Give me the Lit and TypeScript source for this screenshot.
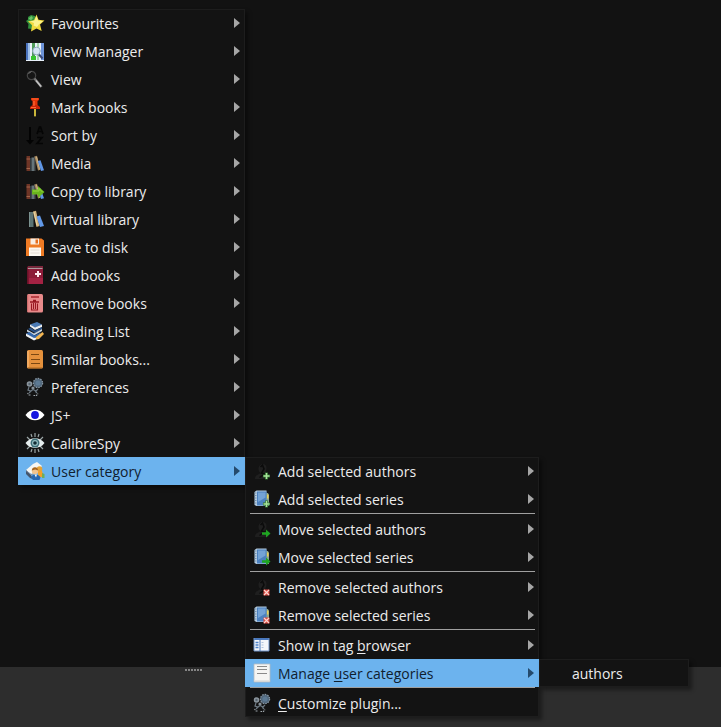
import { LitElement, html, svg, css, nothing, TemplateResult, SVGTemplateResult } from "lit";
import { customElement, property } from "lit/decorators.js";
import { classMap } from "lit/directives/class-map.js";

interface Entry {
  label?: string;
  mnemonic?: number;
  icon?: string;
  arrow?: boolean;
  separator?: boolean;
  children?: Entry[];
}

const shelf = svg`
  <path d="M1.500 3h3.500v15H1.500z" fill="#6e3526"/><path d="M1.500 6h3.500M1.500 15.500h3.500" stroke="#a3654a" stroke-width="1"/>
  <path d="M5 5h1.500v13H5z" fill="#33393d"/>
  <path d="M6.500 4.500h2.500v13.500H6.500z" fill="#66757a"/>
  <path d="M9 3.500h1.500V18H9z" fill="#4b5052"/>
  <path d="M9.500 3.500l2.500-.8 3.500 14-2.500 .8z" fill="#a98a60"/>
  <path d="M11.500 4l3 12.500" stroke="#d0b486" stroke-width="1"/>
  <path d="M12.800 8l2.700-.8 3.500 10-3 .8z" fill="#5f96e6"/>`;

const gearFigure = svg`
  <circle cx="13" cy="6" r="4.600" fill="#51677b" stroke="#8796a3" stroke-width="1.200" stroke-dasharray="1.600 1"/>
  <circle cx="13" cy="6" r="2.600" fill="#5d7a94"/>
  <circle cx="4.500" cy="7" r="2.800" fill="#8b959d"/>
  <circle cx="4.500" cy="7" r="1.200" fill="#56646f"/>
  <circle cx="8" cy="11" r="1.600" fill="#87919a"/>
  <path d="M4 10l-1 3 3 1 2-1.500 3 1.500 2-2M6 14l-2 2M10 14l2 2" stroke="#6c7882" stroke-width="1.200" fill="none"/>
  <path d="M2.500 16l1.500 2h2M8.500 18.500h3l1.500-2" stroke="#a0a8ae" stroke-width="1.100" stroke-dasharray="1.600 .8" fill="none"/>`;

const author = svg`
  <path d="M6.500 8c0-6 8-7 8-1 0 3-1.500 4-1 6 2 1 3 2 3 5H3c0-4 3-4 5.500-6C7.500 11 6.500 10 6.500 8z" fill="#1f1f1f"/>
  <path d="M8.500 6l2-2 1.500 4-2.500 4 3 1-5 3.500" stroke="#0b0b0b" stroke-width="1.500" fill="none"/>`;

const series = svg`
  <path d="M2.500 3l2-1.500h10V17h-10l-2-1z" fill="#b4cbe0"/>
  <path d="M14 4h2l1 2v11h-3z" fill="#8ba590"/><path d="M15 5.500h1.500v4H15z" fill="#e9cf54"/>
  <path d="M5 2.500h9.500v14H5z" fill="#4c81bf"/><path d="M6 3.500h7.500v5L6 13z" fill="#74a3d6"/>
  <path d="M2.500 4h2M2.500 6.500h2M2.500 9h2M2.500 11.500h2M2.500 14h2" stroke="#64839f" stroke-width=".8"/>`;

const plus = svg`
  <path d="M14.500 11.500v7M11 15h7" stroke="#2d6d2d" stroke-width="3"/>
  <path d="M14.500 12v6M11.500 15h6" stroke="#a9e39c" stroke-width="1.500"/>`;
const moveArrow = svg`<path d="M10 13.200h4V10.500l4.500 4-4.500 4v-2.700h-4z" fill="#1fa522"/>`;
const cross = svg`
  <path d="M11.500 12.500h6v6h-6z" fill="#dc4a42"/>
  <path d="M12 13l5 5M17 13l-5 5" stroke="#ffd5cf" stroke-width="1.200"/>`;

const icons: Record<string, SVGTemplateResult> = {
  favourites: svg`
    <path d="M3 4l3-2 4 1 2 8-5 5-4-.5 .5-4.500-2.500-3 2-1.500z" fill="#2f8f3c"/><path d="M3.500 5.500l3-2.500 1.500 2-2 2.500z" fill="#6cc566"/>
    <path d="M11.500 1.500l2 5.200 6 .8-4.500 4 1.700 6.500-5.200-2.500-5.500 3 1-6.200L3 8.200l6-1z" fill="#f0d93c"/>
    <path d="M11.500 3l1.500 4.500 5 .7-4 3-2 2.800-3.500-1.500 .5-2.500-4-1.500 4.500-1z" fill="#fdf38e"/>`,
  manager: svg`
    <path d="M1 2h18v18H1z" fill="#e9f1fa"/>
    <path d="M1 2h2v17H1z" fill="#4b73bd"/><path d="M3 2h2v17H3z" fill="#9fbfe8"/><path d="M7 2h3v17H7z" fill="#4f9b58"/><path d="M12 2h2v17h-2z" fill="#a4d3ae"/><path d="M16 2h3v17h-3z" fill="#6d93d8"/>
    <path d="M6 15h5v4H6z" fill="#38c531"/>
    <circle cx="11.500" cy="10" r="3.800" fill="#d4e5f4" stroke="#8fa6bd"/>
    <path d="M14 13.500l3.500 4" stroke="#3b4a78" stroke-width="2"/>`,
  view: svg`
    <circle cx="6.500" cy="6.500" r="4.200" fill="#161616" stroke="#454545" stroke-width="1.200"/><path d="M3.500 4.500l3-2" stroke="#777" stroke-width="1"/>
    <path d="M9.500 9.500l7 8.500" stroke="#777" stroke-width="2.400"/>
    <path d="M11 11.500l5 6" stroke="#c9c9c9" stroke-width="1.200"/>`,
  pin: svg`
    <path d="M9 12h2v7l-1 .8-1-.8z" fill="#c9b53a"/>
    <path d="M6 1h8v2l-1.500 1v4.500H7.500V4L6 3z" fill="#e33309"/>
    <path d="M7.500 8h5l2.500 2v2H5v-2z" fill="#c92408"/>
    <path d="M7 2h6M9 4v5M6 10.500h5" stroke="#ff6a35" stroke-width="1.200"/>`,
  sort: svg`
    <path d="M4 2h2v13h3l-4 4.500L1 15h3z" fill="#030303"/>
    <path d="M12 9l2.500-7h1L18 9M13 6.500h4M12 12.500h5l-5 6h6" stroke="#050505" stroke-width="1.700" fill="none"/>`,
  media: shelf,
  copy: svg`${shelf}<path d="M7 8.500h6V5l6.500 6-6.500 6v-3.500H7z" fill="#68b51c"/><path d="M8 10h6V7.500l3.500 3.500" stroke="#98d642" stroke-width="1" fill="none"/>`,
  virtual: svg`
    <path d="M4 3h4.500v15H4z" fill="#5b7374"/><path d="M4.500 3v15" stroke="#7b9290" stroke-width="1"/>
    <path d="M8 2.500l3-.8L14.500 17l-3 1z" fill="#d1b27d"/><path d="M9 3l3 13.500" stroke="#ead6a6" stroke-width="1"/>
    <path d="M11.500 7.500l3.500-1L19 17l-4 1z" fill="#6299e8"/>`,
  save: svg`
    <path d="M1 1.500h15.500l2.500 2V19H1z" fill="#ef7b24"/><path d="M4 10.500h12V19H4z" fill="#fdf8f1"/>
    <path d="M5.500 1.500h8.500v6H5.500z" fill="#f8ede3"/><path d="M10.500 2.500h2.500v4h-2.500z" fill="#e66e1d"/>
    <path d="M5.500 13h9M5.500 16h9" stroke="#e6ddd4" stroke-width="1"/>`,
  add: svg`
    <path d="M2 3l1-2h15v18H3l-1-1z" fill="#8d1b38"/><path d="M3 3h14.500v1H3z" fill="#b09a9e"/><path d="M3 1.500h14.500v1.500H3z" fill="#6c313e"/>
    <path d="M2 4h1.500v15H2z" fill="#6a1228"/><path d="M4 13h14v6H4z" fill="#a42243"/>
    <path d="M13 6v6M10 9h6" stroke="#ffe9ef" stroke-width="2"/>`,
  remove: svg`
    <rect x="2" y="1" width="16" height="18.500" rx="1.500" fill="#e88a8a"/><path d="M2.700 2v16.500" stroke="#c96666" stroke-width="1"/>
    <path d="M6 4h8" stroke="#a01820" stroke-width="1.300"/>
    <path d="M5 9h9M8 7.500h3" stroke="#971720" stroke-width="1.300"/>
    <path d="M6.500 10.500v6.500h6v-6.500M8.500 10v6M10.500 10v6" stroke="#971720" stroke-width="1.100" fill="none"/>`,
  reading: svg`
    <path d="M5 3.500l7-2.500 5 2.500-7 3.500z" fill="#4b7ab4"/><path d="M5 3.500v2l5 3.500 7-3v-2.500l-7 3z" fill="#e9eef3"/>
    <path d="M3 8l2.500-1.500 4.500 3 7-3.500v2l-7 4z" fill="#2a5288"/><path d="M2 8.500v2l7 4 8-4.500V8l-8 4.500z" fill="#c5d2df"/>
    <path d="M1 12.500l3.500-1.500 5 3.500 6-3v2L9 17.500z" fill="#3368ae"/><path d="M1 12.500v2.500l8 4.500 2-1v-2l-2 .5z" fill="#eef2f6"/>
    <path d="M11 16l6.500-5 1.500 2-5 5-3 .5z" fill="#f2b551"/>`,
  similar: svg`
    <rect x="2" y="1" width="16" height="18.500" rx="1.500" fill="#e5913c"/><path d="M3 2v16.500" stroke="#f3b26c" stroke-width="1.500"/><path d="M3 19h14" stroke="#a8641f" stroke-width="1"/>
    <path d="M6 5.500h8M6 10.500h9M6 14.500h9" stroke="#7a4712" stroke-width="1.200"/>`,
  gears: gearFigure,
  eye: svg`
    <path d="M.500 10C5 3 15 3 19.500 10 15 17 5 17 .500 10z" fill="#fff"/>
    <circle cx="10" cy="10" r="3.900" fill="#1515e0"/>`,
  spy: svg`
    <path d="M10 0v4M6 1l1 3M14 1l-1 3M2 4l3 3M18 4l-3 3M10 16v4M6 19l1-3M14 19l-1-3M2 16l3-3M18 16l-3-3" stroke="#9aa4a5" stroke-width="1.200"/>
    <path d="M.500 10C5 3.500 15 3.500 19.500 10 15 16.500 5 16.500 .500 10z" fill="#e6eded"/>
    <circle cx="10" cy="10" r="4.500" fill="#3c6d77"/><circle cx="10" cy="10" r="3" fill="#93bcc0"/><circle cx="10" cy="10" r="1.800" fill="#102a33"/>`,
  category: svg`
    <path d="M1 9l5 5 2 4-3-1-4-4z" fill="#45566c"/>
    <path d="M1 9l7-6 4-2 5 4-6 7-5 1z" fill="#f6f6f2"/><path d="M1 9.500l5 4 4-1" stroke="#7d8da1" stroke-width="1" fill="none"/>
    <circle cx="14.500" cy="8" r="2.800" fill="#e5a338"/><path d="M13 10h4l2 6h-6z" fill="#f0a02d"/><path d="M17 12l2.500 1v4H17z" fill="#6fae5a"/>
    <circle cx="10" cy="10" r="3.200" fill="#f2c48e"/><path d="M6.800 9.500c0-4.500 6.400-4.500 6.400 0l-3-1z" fill="#a5651f"/>
    <path d="M6 16.500c1-4 8-4 9.500 0l-1 2.500H8z" fill="#2868b0"/><path d="M9.500 13.500l1.500 3 1-3z" fill="#fff"/>`,
  authorAdd: svg`${author}${plus}`,
  authorMove: svg`${author}${moveArrow}`,
  authorRemove: svg`${author}${cross}`,
  seriesAdd: svg`${series}${plus}`,
  seriesMove: svg`${series}${moveArrow}`,
  seriesRemove: svg`${series}${cross}`,
  browser: svg`
    <path d="M2 3h15v13H2z" fill="#f3f6fb"/><path d="M2 3h15v2H2z" fill="#4978bd"/><path d="M2 3v13h15V3" stroke="#6e93c9" stroke-width="1" fill="none"/>
    <path d="M8 5v11" stroke="#4978bd" stroke-width="1"/>
    <path d="M3.500 7.500h3M3.500 10h3M3.500 12.500h3" stroke="#4d83cb" stroke-width="1.300"/><path d="M9.500 7.500h2M9.500 10h2M9.500 12.500h2" stroke="#b3c5df" stroke-width="1"/>`,
  document: svg`
    <path d="M2 1h16v18H2z" fill="#f5f5f3" stroke="#b4babf" stroke-width=".8"/><path d="M3 18h14" stroke="#d0d0ce"/>
    <path d="M5 3.500h10M5 6.500h10M5 10.500h10" stroke="#8a8a8a" stroke-width="1.100"/>`,
};

const sub = (label: string, icon: string, children?: Entry[], mnemonic?: number): Entry => ({
  label,
  icon,
  children,
  mnemonic,
  arrow: true,
});

const categoryMenu: Entry[] = [
  sub("Add selected authors", "authorAdd"),
  sub("Add selected series", "seriesAdd"),
  { separator: true },
  sub("Move selected authors", "authorMove"),
  sub("Move selected series", "seriesMove"),
  { separator: true },
  sub("Remove selected authors", "authorRemove"),
  sub("Remove selected series", "seriesRemove"),
  { separator: true },
  sub("Show in tag browser", "browser", undefined, 12),
  sub("Manage user categories", "document", [{ label: "authors" }], 7),
  { separator: true },
  { label: "Customize plugin...", icon: "gears", mnemonic: 0 },
];

const mainMenu: Entry[] = [
  sub("Favourites", "favourites"),
  sub("View Manager", "manager"),
  sub("View", "view"),
  sub("Mark books", "pin"),
  sub("Sort by", "sort"),
  sub("Media", "media"),
  sub("Copy to library", "copy"),
  sub("Virtual library", "virtual"),
  sub("Save to disk", "save"),
  sub("Add books", "add"),
  sub("Remove books", "remove"),
  sub("Reading List", "reading"),
  sub("Similar books...", "similar"),
  sub("Preferences", "gears"),
  sub("JS+", "eye"),
  sub("CalibreSpy", "spy"),
  sub("User category", "category", categoryMenu),
];

@customElement("popup-menu")
class PopupMenu extends LitElement {
  @property({ attribute: false }) entries: Entry[] = [];

  static styles = css`
    :host {
      display: block;
      box-sizing: border-box;
      background: #131313;
      outline: 1px solid #1d1d1d;
      outline-offset: -1px;
      box-shadow: 3px 3px 4px rgba(0, 0, 0, 0.4);
    }
    .menu {
      list-style: none;
      margin: 0;
      padding: 0;
    }
    .row {
      position: relative;
    }
    .item {
      display: flex;
      align-items: center;
      gap: 6px;
      width: 100%;
      height: 28px;
      padding: 0 5px 0 7px;
      border: 0;
      background: none;
      color: #ececec;
      font: inherit;
      text-align: left;
      white-space: pre;
    }
    .item:focus {
      outline: none;
    }
    .open {
      background: #6cb3ee;
      color: #10202e;
    }
    .icon {
      flex: none;
      width: 20px;
      height: 20px;
    }
    .label {
      flex: 1;
      padding-top: 2px;
    }
    .mnemonic {
      text-decoration: underline;
      text-underline-offset: 2px;
    }
    .arrow {
      flex: none;
      width: 6px;
      height: 10px;
      fill: #a6a6a6;
    }
    .open .arrow {
      fill: #244a6c;
    }
    .separator {
      height: 1px;
      margin: 0 4px 1px 5px;
      background: #a0a0a0;
    }
    .flyout {
      position: absolute;
      top: 0;
      left: 100%;
      width: max-content;
      min-width: 150px;
    }
    .wide {
      min-width: 294px;
    }
  `;

  private text(entry: Entry): TemplateResult {
    const label = entry.label ?? "";
    const at = entry.mnemonic;
    if (at === undefined) return html`<span class="label">${label}</span>`;
    return html`<span class="label">${label.slice(0, at)}<span class="mnemonic">${label[at]}</span>${label.slice(at + 1)}</span>`;
  }

  private row(entry: Entry): TemplateResult {
    if (entry.separator) return html`<li class="separator" role="separator"></li>`;
    const open = !!entry.children;
    return html`
      <li class="row" role="none">
        <button
          class=${classMap({ item: true, open })}
          type="button"
          role="menuitem"
          aria-haspopup=${entry.arrow ? "menu" : nothing}
          aria-expanded=${entry.arrow ? String(open) : nothing}
        >
          <svg class="icon" viewBox="0 0 20 20" fill="none" aria-hidden="true">${entry.icon ? icons[entry.icon] : nothing}</svg>
          ${this.text(entry)}
          ${entry.arrow
            ? html`<svg class="arrow" viewBox="0 0 6 10" aria-hidden="true"><path d="M0 0l6 5-6 5z" /></svg>`
            : nothing}
        </button>
        ${entry.children
          ? html`<popup-menu
              class=${classMap({ flyout: true, wide: entry.children.length > 1 })}
              .entries=${entry.children}
            ></popup-menu>`
          : nothing}
      </li>
    `;
  }

  render() {
    return html`<ul class="menu" role="menu">${this.entries.map((entry) => this.row(entry))}</ul>`;
  }
}

@customElement("app-root")
class AppRoot extends LitElement {
  static styles = css`
    :host {
      display: flex;
      flex-direction: column;
      position: relative;
      min-height: 100vh;
      overflow: hidden;
      background: #121212;
      font: 14px/20px "Segoe UI", "Open Sans", "Noto Sans", sans-serif;
    }
    .content {
      flex: 1;
    }
    .panel {
      display: flex;
      justify-content: flex-start;
      height: 60px;
      background: #2d2d2d;
    }
    .grip {
      display: flex;
      gap: 1px;
      margin: 2px 0 0 185px;
    }
    .dot {
      width: 2px;
      height: 2px;
      background: #858585;
    }
    .context {
      position: absolute;
      top: 9px;
      left: 18px;
      width: 227px;
    }
  `;

  render() {
    return html`
      <main class="content"></main>
      <footer class="panel">
        <div class="grip">${Array.from({ length: 6 }, () => html`<span class="dot"></span>`)}</div>
      </footer>
      <popup-menu class="context" .entries=${mainMenu}></popup-menu>
    `;
  }
}
